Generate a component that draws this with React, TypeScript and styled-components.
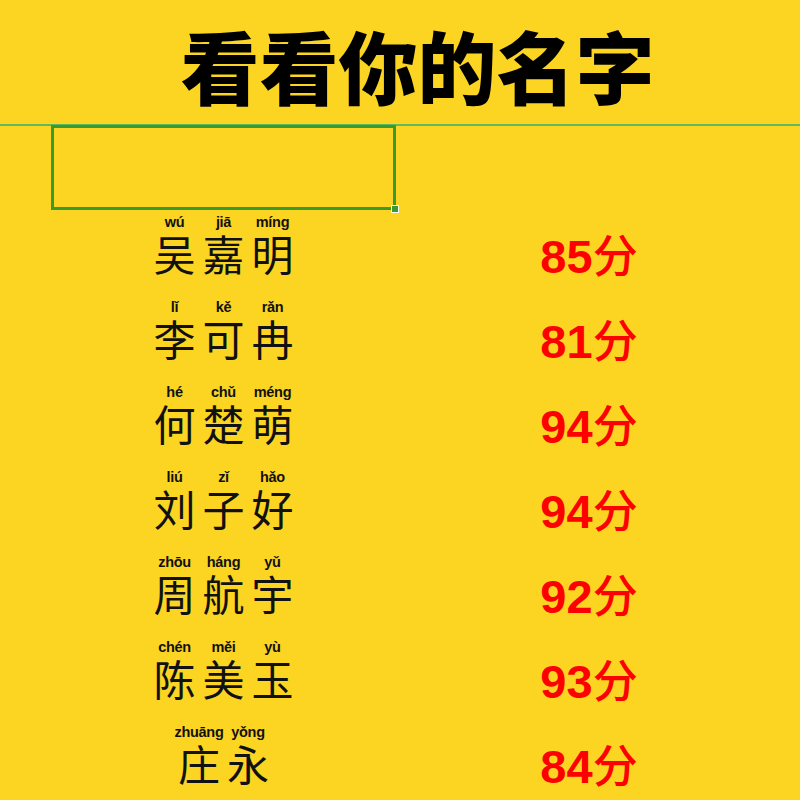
import React from "react";
import styled, { createGlobalStyle } from "styled-components";

const Global = createGlobalStyle`
  html, body { margin: 0; padding: 0; background: #fbd522; }
  body { font-family: "Noto Sans CJK SC", "Liberation Sans", sans-serif; }
`;

const Page = styled.div`
  width: 800px;
  height: 800px;
  overflow: hidden;
  background: #fbd522;
`;

const Header = styled.header`
  height: 124px;
  display: flex;
  justify-content: center;
  align-items: flex-start;
  padding-left: 35px;
  box-sizing: border-box;
`;

const Title = styled.h1`
  margin: 0;
  padding-top: 10px;
  font-family: "Noto Sans CJK SC", sans-serif;
  font-weight: 900;
  font-size: 79px;
  line-height: 110px;
  color: #000;
  letter-spacing: 0;
`;

const Rule = styled.div`
  height: 2px;
  background: #5dbb5e;
`;

const Sheet = styled.div`
  display: grid;
  grid-template-columns: 51px 345px 384px 1fr;
  grid-auto-rows: 85px;
  margin-top: -1px;
`;

const Spacer = styled.div``;

const SelectedCell = styled.div`
  position: relative;
  border: 3px solid #3a9a2b;
  box-sizing: border-box;
`;

const Handle = styled.span`
  position: absolute;
  right: -6px;
  bottom: -6px;
  width: 6px;
  height: 6px;
  background: #3a9a2b;
  border: 1px solid #ffffff;
`;

const NameCell = styled.div`
  display: flex;
  justify-content: center;
  align-items: center;
  padding-bottom: 17px;
`;

const NameGroup = styled.div`
  display: flex;
`;

const CharCol = styled.div`
  width: 49px;
  display: flex;
  flex-direction: column;
  align-items: center;
  gap: 2px;
`;

const Pinyin = styled.span`
  font-family: "Liberation Sans", Arial, sans-serif;
  font-weight: 700;
  font-size: 14.5px;
  line-height: 16px;
  color: #111;
  white-space: nowrap;
  letter-spacing: -0.3px;
`;

const Hanzi = styled.span`
  font-family: "Noto Sans CJK SC", sans-serif;
  font-weight: 400;
  font-size: 42px;
  line-height: 42px;
  color: #111;
`;

const ScoreCell = styled.div`
  display: flex;
  justify-content: center;
  align-items: center;
  padding-top: 6px;
  padding-left: 2px;
`;

const Score = styled.span`
  font-family: "Liberation Sans", Arial, "Noto Sans CJK SC", sans-serif;
  font-weight: 700;
  font-size: 47px;
  line-height: 50px;
  color: #ff0000;
`;

const ScoreUnit = styled.span`
  font-family: "Noto Sans CJK SC", sans-serif;
  font-weight: 500;
  font-size: 45px;
`;

type Person = { chars: string[]; pinyin: string[]; score: number };

const people: Person[] = [
  { chars: ["吴", "嘉", "明"], pinyin: ["wú", "jiā", "míng"], score: 85 },
  { chars: ["李", "可", "冉"], pinyin: ["lǐ", "kě", "rǎn"], score: 81 },
  { chars: ["何", "楚", "萌"], pinyin: ["hé", "chǔ", "méng"], score: 94 },
  { chars: ["刘", "子", "好"], pinyin: ["liú", "zǐ", "hǎo"], score: 94 },
  { chars: ["周", "航", "宇"], pinyin: ["zhōu", "háng", "yǔ"], score: 92 },
  { chars: ["陈", "美", "玉"], pinyin: ["chén", "měi", "yù"], score: 93 },
  { chars: ["庄", "永"], pinyin: ["zhuāng", "yǒng"], score: 84 },
];

export default function App() {
  return (
    <Page>
      <Global />
      <Header>
        <Title>看看你的名字</Title>
      </Header>
      <Rule />
      <Sheet>
        <Spacer />
        <SelectedCell>
          <Handle />
        </SelectedCell>
        <Spacer />
        <Spacer />
        {people.map((p, i) => (
          <React.Fragment key={i}>
            <Spacer />
            <NameCell>
              <NameGroup>
                {p.chars.map((c, j) => (
                  <CharCol key={j}>
                    <Pinyin>{p.pinyin[j]}</Pinyin>
                    <Hanzi>{c}</Hanzi>
                  </CharCol>
                ))}
              </NameGroup>
            </NameCell>
            <ScoreCell>
              <Score>
                {p.score}
                <ScoreUnit>分</ScoreUnit>
              </Score>
            </ScoreCell>
            <Spacer />
          </React.Fragment>
        ))}
      </Sheet>
    </Page>
  );
}
